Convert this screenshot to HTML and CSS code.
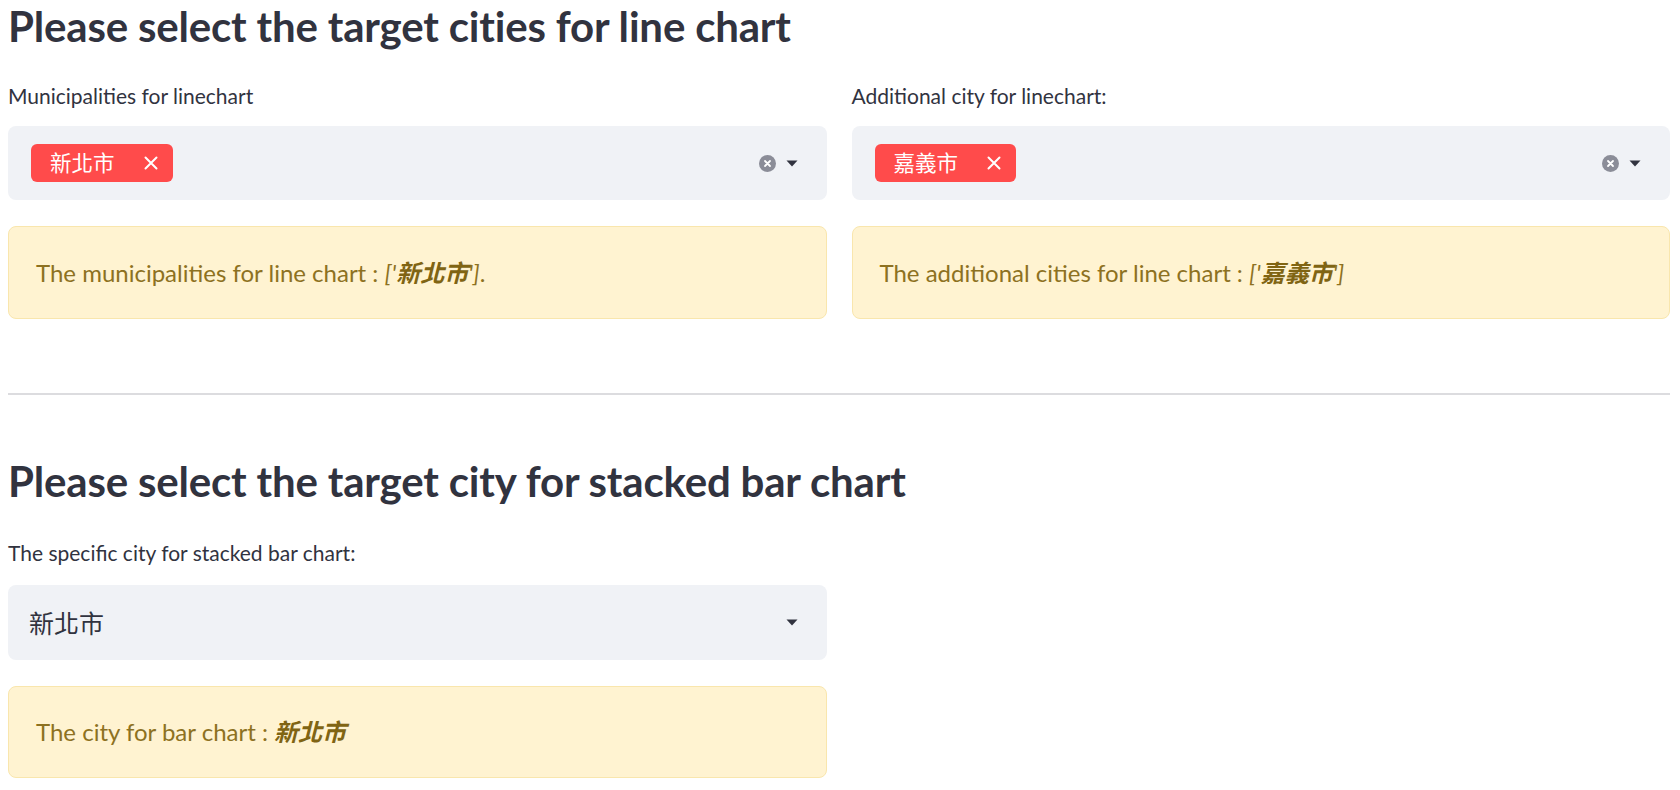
FILE: index.html
```html
<!DOCTYPE html>
<html lang="en">
<head>
<meta charset="utf-8">
<title>City selection</title>
<link rel="stylesheet" href="styles.css">
</head>
<body>
<main class="page">
  <h3 class="heading heading-first">Please select the target cities for line chart</h3>
  <div class="columns">
    <div class="col">
      <label class="label">Municipalities for linechart</label>
      <div class="select">
        <div class="select-values">
          <span class="tag"><span class="tag-text">新北市</span><svg class="tag-x" width="14" height="14" viewBox="0 0 14 14"><path d="M1.5 1.5 L12.5 12.5 M12.5 1.5 L1.5 12.5" stroke="#fff" stroke-width="2" stroke-linecap="round" fill="none"/></svg></span>
        </div>
        <div class="icons">
          <svg class="clear" width="17" height="17" viewBox="0 0 17 17"><circle cx="8.5" cy="8.5" r="8.5" fill="#8b8d98"/><path d="M6 6 L11 11 M11 6 L6 11" stroke="#fff" stroke-width="1.8" stroke-linecap="round"/></svg>
          <svg class="arrow" width="12" height="7" viewBox="0 0 12 7"><path d="M0.5 0.5 L11.5 0.5 L6 6.5 Z" fill="#31333f"/></svg>
        </div>
      </div>
      <div class="alert"><p>The municipalities for line chart : <em>['<strong>新北市</strong>']</em>.</p></div>
    </div>
    <div class="col">
      <label class="label">Additional city for linechart:</label>
      <div class="select">
        <div class="select-values">
          <span class="tag"><span class="tag-text">嘉義市</span><svg class="tag-x" width="14" height="14" viewBox="0 0 14 14"><path d="M1.5 1.5 L12.5 12.5 M12.5 1.5 L1.5 12.5" stroke="#fff" stroke-width="2" stroke-linecap="round" fill="none"/></svg></span>
        </div>
        <div class="icons">
          <svg class="clear" width="17" height="17" viewBox="0 0 17 17"><circle cx="8.5" cy="8.5" r="8.5" fill="#8b8d98"/><path d="M6 6 L11 11 M11 6 L6 11" stroke="#fff" stroke-width="1.8" stroke-linecap="round"/></svg>
          <svg class="arrow" width="12" height="7" viewBox="0 0 12 7"><path d="M0.5 0.5 L11.5 0.5 L6 6.5 Z" fill="#31333f"/></svg>
        </div>
      </div>
      <div class="alert"><p>The additional cities for line chart : <em>['<strong>嘉義市</strong>']</em></p></div>
    </div>
  </div>

  <hr class="divider">

  <h3 class="heading heading-second">Please select the target city for stacked bar chart</h3>
  <div class="columns">
    <div class="col">
      <label class="label label-second">The specific city for stacked bar chart:</label>
      <div class="select select-single">
        <div class="select-values"><span class="single-value">新北市</span></div>
        <div class="icons">
          <svg class="arrow" width="12" height="7" viewBox="0 0 12 7"><path d="M0.5 0.5 L11.5 0.5 L6 6.5 Z" fill="#31333f"/></svg>
        </div>
      </div>
      <div class="alert alert-last"><p>The city for bar chart : <em><strong>新北市</strong></em></p></div>
    </div>
    <div class="col"></div>
  </div>
</main>
</body>
</html>
```

FILE: styles.css
```css
* {
  box-sizing: border-box;
}

html, body {
  margin: 0;
  background: #ffffff;
}

body {
  font-family: Lato, "Noto Sans CJK TC", sans-serif;
  color: #31333f;
}

.page {
  padding: 0 10px 0 8px;
}

.heading {
  margin: 0;
  font-size: 42px;
  line-height: 52px;
  font-weight: 700;
  letter-spacing: -0.18px;
  color: #31333f;
}

.heading-first {
  margin-bottom: 29px;
}

.heading-second {
  margin-top: 60px;
  margin-bottom: 31px;
}

.columns {
  display: grid;
  grid-template-columns: 1fr 1fr;
  column-gap: 25px;
}

.label {
  display: block;
  font-size: 21px;
  line-height: 30px;
  margin-bottom: 15px;
}

.label-second {
  margin-bottom: 17px;
}

.select {
  display: flex;
  align-items: center;
  height: 74px;
  background: #f0f2f6;
  border-radius: 8px;
  padding: 0 29px 0 23px;
}

.select-single {
  height: 75px;
  padding-left: 21px;
}

.select-values {
  flex: 1;
  display: flex;
  align-items: center;
}

.tag {
  display: inline-flex;
  align-items: center;
  height: 38px;
  background: #ff4b4b;
  color: #ffffff;
  border-radius: 6px;
  padding: 0 15px 0 19px;
  gap: 29px;
  font-size: 21.5px;
  line-height: 38px;
}

.tag-x {
  display: block;
}

.single-value {
  font-size: 25px;
  line-height: 36px;
  color: #31333f;
}

.icons {
  display: flex;
  align-items: center;
  gap: 10px;
}

.icons svg {
  display: block;
}

.alert {
  margin-top: 26px;
  height: 93px;
  display: flex;
  align-items: center;
  padding: 0 27px;
  background: #fff3d1;
  border: 1px solid #f9e6ad;
  border-radius: 8px;
  color: #8d7121;
  font-size: 24px;
  line-height: 36px;
}

.alert p {
  margin: 0;
}

.alert strong {
  font-weight: 700;
  color: #806413;
}

.alert-last {
  height: 92px;
}

.divider {
  margin: 74px 0 0;
  border: 0;
  height: 2px;
  background: #dcdcdf;
}
```
